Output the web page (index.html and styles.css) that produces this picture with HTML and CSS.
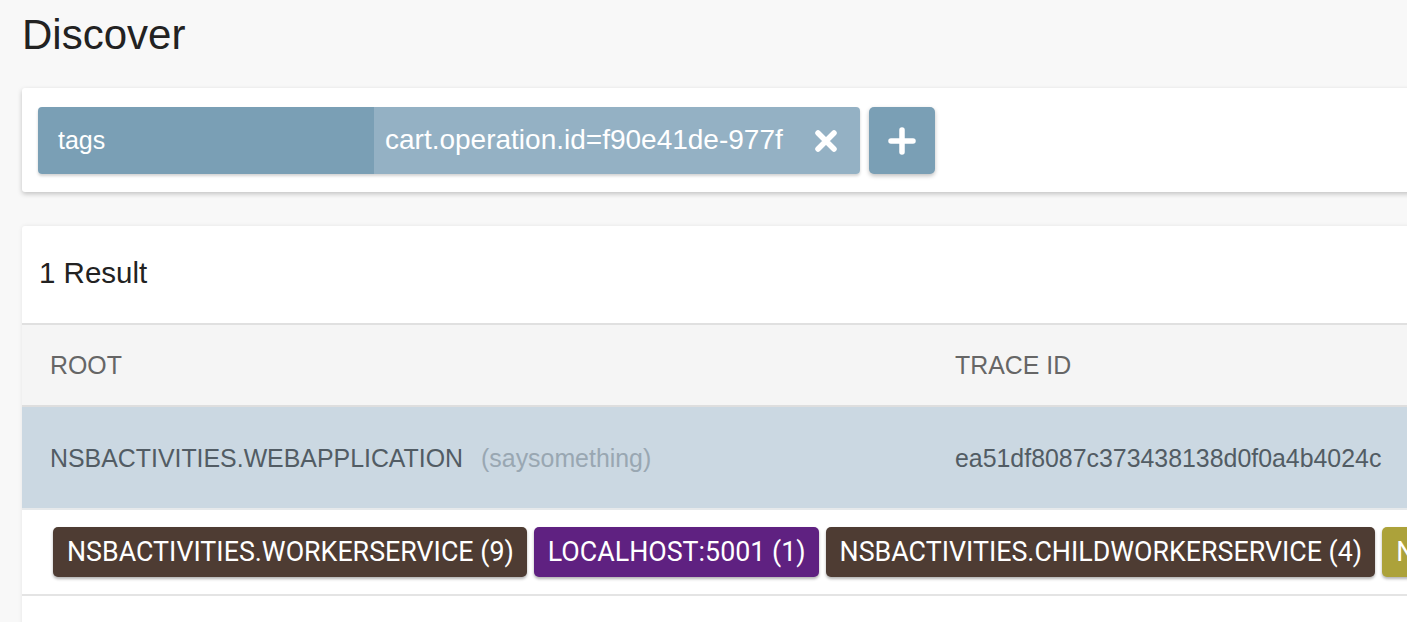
FILE: index.html
```html
<!DOCTYPE html>
<html>
<head>
<meta charset="utf-8">
<link rel="stylesheet" href="styles.css">
</head>
<body>
<div class="page">
  <h1 class="title">Discover</h1>

  <div class="card search-card">
    <div class="chip">
      <div class="chip-key">tags</div>
      <div class="chip-value">
        <span class="chip-text">cart.operation.id=f90e41de-977f</span>
        <svg class="chip-x" width="24" height="24" viewBox="0 0 24 24"><path d="M4 4 L20 20 M20 4 L4 20" stroke="#fff" stroke-width="5.5" stroke-linecap="round" fill="none"/></svg>
      </div>
    </div>
    <button class="add-btn">
      <svg width="28" height="28" viewBox="0 0 28 28"><path d="M14 3 V25 M3 14 H25" stroke="#fff" stroke-width="5.5" stroke-linecap="round" fill="none"/></svg>
    </button>
  </div>

  <div class="card results-card">
    <div class="results-head">1 Result</div>
    <div class="table-row table-header">
      <div class="cell">ROOT</div>
      <div class="cell">TRACE ID</div>
    </div>
    <div class="table-row table-data">
      <div class="cell"><span class="root-name">NSBACTIVITIES.WEBAPPLICATION</span><span class="root-op">(saysomething)</span></div>
      <div class="cell trace-id">ea51df8087c373438138d0f0a4b4024c</div>
    </div>
    <div class="badges-row">
      <span class="badge badge-brown">NSBACTIVITIES.WORKERSERVICE (9)</span>
      <span class="badge badge-purple">LOCALHOST:5001 (1)</span>
      <span class="badge badge-brown">NSBACTIVITIES.CHILDWORKERSERVICE (4)</span>
      <span class="badge badge-olive">NSBACTIVITIES.MESSAGEHANDLER (2)</span>
    </div>
    <div class="results-foot"></div>
  </div>
</div>
</body>
</html>
```

FILE: styles.css
```css
html, body {
  margin: 0;
  padding: 0;
  background: #f8f8f8;
  overflow: hidden;
  font-family: "Liberation Sans", Arial, sans-serif;
}

.page {
  padding: 14px 0 0 22px;
  width: 1420px;
}

.title {
  margin: 0 0 32px 0;
  font-size: 42px;
  line-height: 42px;
  font-weight: normal;
  color: #222;
}

.card {
  background: #fff;
  border-radius: 3px;
}

.search-card {
  display: flex;
  align-items: center;
  gap: 9px;
  padding: 19px 16px 18px 16px;
  box-shadow: 0 2px 5px rgba(0, 0, 0, 0.22);
  margin-bottom: 34px;
}

.chip {
  display: flex;
  height: 67px;
  border-radius: 4px;
  overflow: hidden;
  box-shadow: 0 2px 3px rgba(0, 0, 0, 0.18);
}

.chip-key {
  width: 316px;
  padding-left: 20px;
  background: #7a9fb5;
  color: #fff;
  font-size: 25px;
  display: flex;
  align-items: center;
}

.chip-value {
  padding: 0 22px 0 11px;
  background: #94b1c4;
  color: #fff;
  font-size: 28px;
  display: flex;
  align-items: center;
  justify-content: space-between;
  box-sizing: border-box;
  width: 486px;
}

.chip-text {
  white-space: nowrap;
  margin-top: -2px;
}

.add-btn {
  width: 66px;
  height: 67px;
  border: none;
  border-radius: 5px;
  background: #7a9fb5;
  display: flex;
  align-items: center;
  justify-content: center;
  padding: 0;
  box-shadow: 0 2px 4px rgba(0, 0, 0, 0.25);
}

.results-card {
  box-shadow: 0 0 4px rgba(0, 0, 0, 0.08);
  font-size: 24.9px;
}

.results-head {
  height: 99px;
  display: flex;
  align-items: center;
  padding-left: 17px;
  padding-bottom: 4px;
  box-sizing: border-box;
  font-size: 29.5px;
  color: #222;
  border-bottom: 2px solid #e0e0e0;
}

.table-row {
  display: grid;
  grid-template-columns: 905px 1fr;
}

.cell {
  padding-left: 28px;
  padding-top: 1px;
  display: flex;
  align-items: center;
  white-space: nowrap;
}

.table-header {
  height: 80px;
  background: #f5f5f5;
  color: #666;
  border-bottom: 2px solid #dedede;
}

.table-data {
  height: 101px;
  background: #cbd8e2;
  color: #525c64;
  border-bottom: 2px solid #e6e9eb;
}

.root-op {
  margin-left: 18px;
  color: #99a7b2;
}

.badges-row {
  height: 86px;
  display: flex;
  align-items: center;
  gap: 7px;
  padding-left: 31px;
  box-sizing: border-box;
  border-bottom: 2px solid #e4e4e4;
  overflow: hidden;
}

.badge {
  flex: none;
  height: 50px;
  display: flex;
  align-items: center;
  padding: 0 13px 0 14px;
  border-radius: 5px;
  color: #fff;
  font-family: Roboto, "Liberation Sans", Arial, sans-serif;
  font-size: 26.8px;
  white-space: nowrap;
  box-shadow: 0 2px 3px rgba(0, 0, 0, 0.3);
}

.badge-brown { background: #4e3c33; }
.badge-purple { background: #5f2181; }
.badge-olive { background: #aca23a; }

.results-foot {
  height: 40px;
}
```
